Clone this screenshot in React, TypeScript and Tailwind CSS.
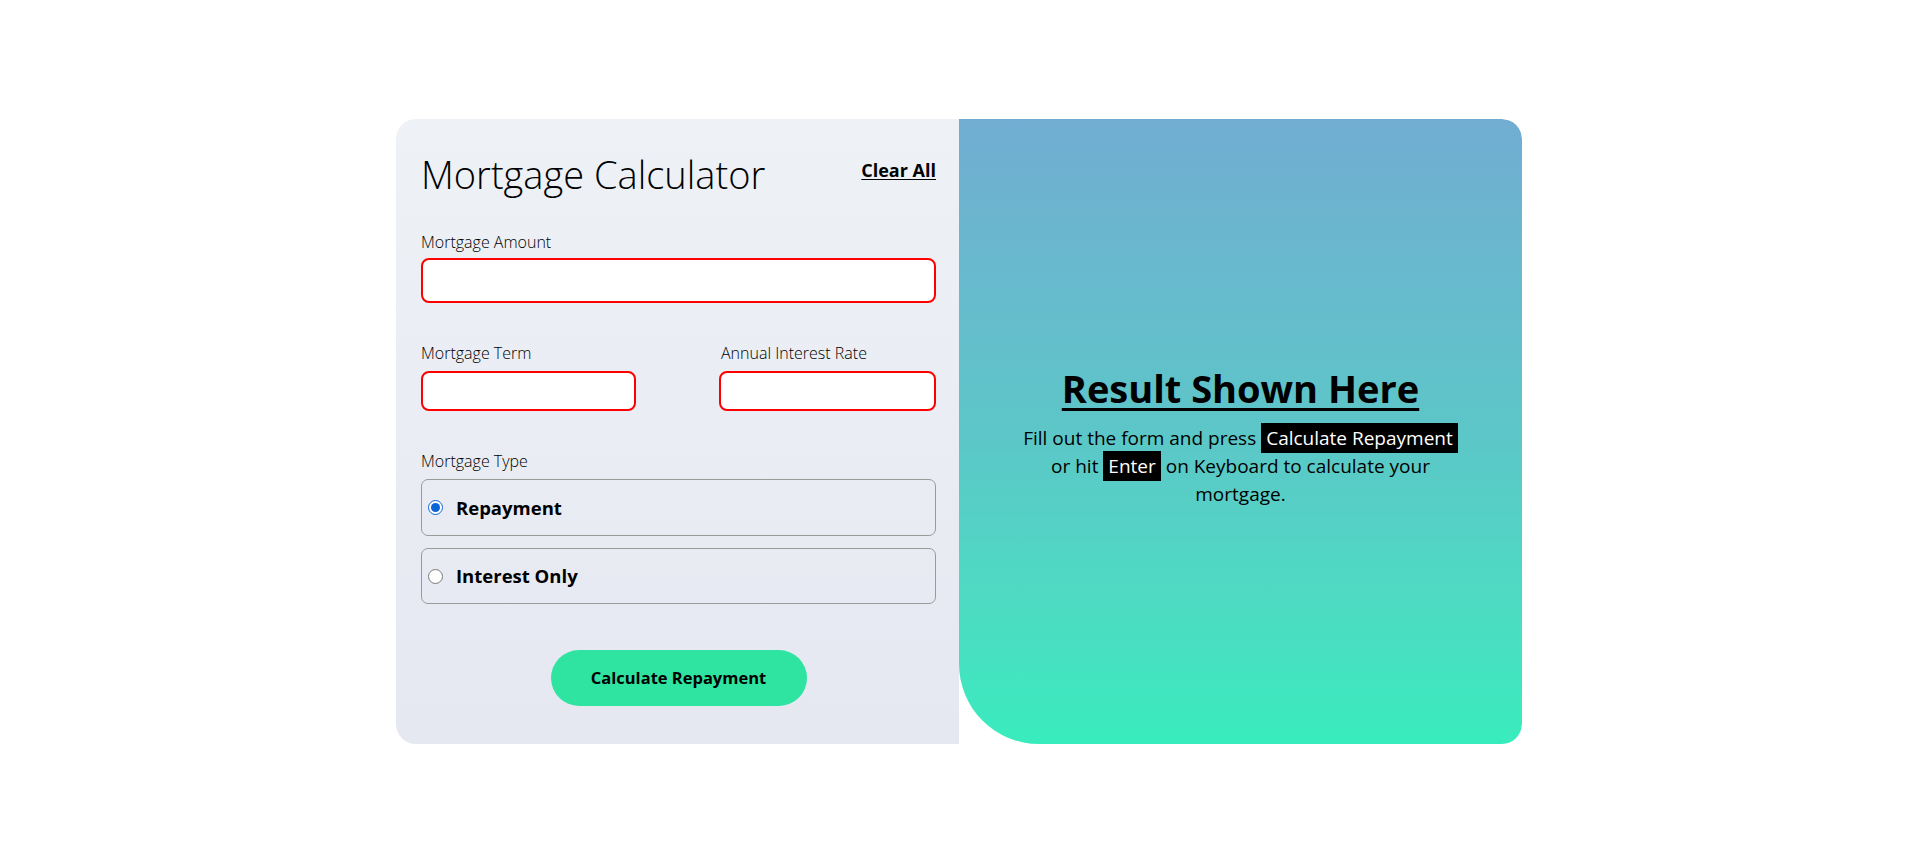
import React from "react";

export default function App() {
  return (
    <div className="min-h-[851px] w-full bg-white" style={{ fontFamily: '"Open Sans", "Noto Sans", sans-serif' }}>
      <div className="pt-[119px]">
        <div className="mx-auto flex h-[625px] w-[1126px] overflow-hidden rounded-[20px]">
          {/* Left panel */}
          <div className="flex w-[563px] flex-col bg-gradient-to-b from-[#eef1f5] to-[#e5e8f1] pl-[25px] pr-[23px] pt-[33px]">
            <div className="flex h-[44px] items-center justify-between">
              <h1 className="text-[38px] font-light leading-[44px] text-black">Mortgage Calculator</h1>
              <button className="-mt-[8px] text-[18px] font-bold text-black underline underline-offset-2">Clear All</button>
            </div>

            <label className="mt-[36px] block h-[20px] text-[16px] font-light leading-[20px] text-black">Mortgage Amount</label>
            <input className="mt-[6px] h-[45px] w-full rounded-[8px] border-2 border-[#ff0000] bg-white px-3 outline-none" />

            <div className="mt-[40px] flex justify-between">
              <div className="flex w-[215px] flex-col">
                <label className="block h-[20px] text-[16px] font-light leading-[20px] text-black">Mortgage Term</label>
                <input className="mt-[8px] h-[40px] w-full rounded-[8px] border-2 border-[#ff0000] bg-white px-3 outline-none" />
              </div>
              <div className="flex w-[217px] flex-col">
                <label className="block h-[20px] pl-[2px] text-[16px] font-light leading-[20px] text-black">Annual Interest Rate</label>
                <input className="mt-[8px] h-[40px] w-full rounded-[8px] border-2 border-[#ff0000] bg-white px-3 outline-none" />
              </div>
            </div>

            <label className="mt-[40px] block h-[20px] text-[16px] font-light leading-[20px] text-black">Mortgage Type</label>
            <label className="mt-[8px] flex h-[57px] items-center gap-[13px] rounded-[7px] border border-[#9a9a9a] pl-[6px]">
              <input type="radio" name="type" defaultChecked className="m-0 h-[15px] w-[15px] accent-[#0b63d8]" />
              <span className="text-[18.5px] font-bold text-black">Repayment</span>
            </label>
            <label className="mt-[12px] flex h-[56px] items-center gap-[13px] rounded-[7px] border border-[#9a9a9a] pl-[6px]">
              <input type="radio" name="type" className="m-0 h-[15px] w-[15px]" />
              <span className="text-[18.5px] font-bold text-black">Interest Only</span>
            </label>

            <div className="mt-[46px] flex justify-center">
              <button className="h-[56px] w-[256px] rounded-full bg-[#2fe4a0] text-[16.5px] font-bold text-black">
                Calculate Repayment
              </button>
            </div>
          </div>

          {/* Right panel */}
          <div className="flex w-[563px] flex-col items-center justify-center rounded-bl-[80px] rounded-tr-[20px] rounded-br-[20px] bg-gradient-to-b from-[#71add2] via-[#5cc6c8] to-[#38ecbd] pt-[10px] text-center">
            <h2 className="text-[38px] font-bold leading-[44px] text-black underline decoration-[3px] underline-offset-[5px]">
              Result Shown Here
            </h2>
            <p className="mt-[14px] text-[19px] leading-[28px] text-black">
              Fill out the form and press{" "}
              <span className="bg-black px-[5px] py-[2px] text-white">Calculate Repayment</span>
              <br />
              or hit <span className="bg-black px-[5px] py-[2px] text-white">Enter</span> on Keyboard to calculate your
              <br />
              mortgage.
            </p>
          </div>
        </div>
      </div>
    </div>
  );
}
